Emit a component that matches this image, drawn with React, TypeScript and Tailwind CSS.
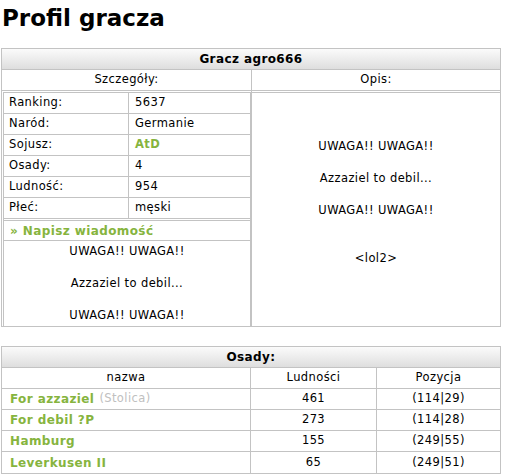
const details = [
  { label: "Ranking:", value: "5637" },
  { label: "Naród:", value: "Germanie" },
  { label: "Sojusz:", value: "AtD", link: true },
  { label: "Osady:", value: "4" },
  { label: "Ludność:", value: "954" },
  { label: "Płeć:", value: "męski" },
];

const villages = [
  { name: "For azzaziel", capital: true, pop: "461", pos: "(114|29)" },
  { name: "For debil ?P", capital: false, pop: "273", pos: "(114|28)" },
  { name: "Hamburg", capital: false, pop: "155", pos: "(249|55)" },
  { name: "Leverkusen II", capital: false, pop: "65", pos: "(249|51)" },
];

function Message() {
  return (
    <>
      UWAGA!! UWAGA!!
      <br />
      <br />
      Azzaziel to debil...
      <br />
      <br />
      UWAGA!! UWAGA!!
    </>
  );
}

export default function App() {
  return (
    <div className="w-[513px] h-[475px] bg-white text-black font-['DejaVu_Sans',sans-serif] text-[11.5px] tracking-[0.4px]">
      <h1 className="h-[48px] pl-[2px] pt-[4px] text-[23px] leading-[28px] font-bold tracking-normal">
        Profil gracza
      </h1>

      {/* player table */}
      <div className="ml-px w-[500px] border border-[#c3c3c3]">
        <div className="h-[21px] flex items-center justify-center border-b border-[#c3c3c3] bg-gradient-to-b from-[#fbfbfb] to-[#dedede] font-bold text-[12px]">
          Gracz agro666
        </div>
        <div className="flex h-[21px] border-b border-[#c3c3c3]">
          <div className="w-[250px] flex items-center justify-center border-r border-[#c3c3c3]">
            Szczegóły:
          </div>
          <div className="flex-1 flex items-center justify-center">Opis:</div>
        </div>

        <div className="flex">
          <div className="w-[250px] pl-px pt-px border-r border-[#c3c3c3]">
            <div className="border-x border-t border-[#c3c3c3]">
              {details.map((d) => (
                <div key={d.label} className="flex h-[21px] border-b border-[#c3c3c3]">
                  <div className="w-[125px] flex items-center pl-[5px] border-r border-[#c3c3c3]">
                    {d.label}
                  </div>
                  <div
                    className={`flex-1 flex items-center pl-[6px] ${
                      d.link ? "font-bold text-[#86b43e]" : ""
                    }`}
                  >
                    {d.value}
                  </div>
                </div>
              ))}
              <div className="h-px" />
              <div className="h-[21px] flex items-center pl-[6px] border-y border-[#c3c3c3] font-bold text-[12px] text-[#86b43e]">
                » Napisz wiadomość
              </div>
              <div className="h-[85px] pt-[2px] text-center leading-[16px]">
                <Message />
              </div>
            </div>
          </div>

          <div className="flex-1 mt-px border-t border-[#c3c3c3] pt-[45px] text-center leading-[16px]">
            <Message />
            <br />
            <br />
            <br />
            &lt;lol2&gt;
          </div>
        </div>
      </div>

      {/* villages table */}
      <div className="mt-[19px] ml-px w-[500px] border border-[#c3c3c3]">
        <div className="h-[21px] flex items-center justify-center border-b border-[#c3c3c3] bg-gradient-to-b from-[#fbfbfb] to-[#dedede] font-bold text-[12px]">
          Osady:
        </div>
        <div className="grid grid-cols-[249px_126px_1fr]">
          <div className="h-[21px] flex items-center justify-center border-r border-b border-[#c3c3c3]">
            nazwa
          </div>
          <div className="h-[21px] flex items-center justify-center border-r border-b border-[#c3c3c3]">
            Ludności
          </div>
          <div className="h-[21px] flex items-center justify-center border-b border-[#c3c3c3]">
            Pozycja
          </div>
          {villages.map((v, i) => {
            const last = i === villages.length - 1;
            return (
              <div key={v.name} className="contents">
                <div
                  className={`h-[21px] flex items-center pl-[8px] border-r border-[#c3c3c3] ${
                    last ? "h-[20px]" : "border-b"
                  }`}
                >
                  <span className="font-bold text-[12px] text-[#86b43e]">{v.name}</span>
                  {v.capital && <span className="ml-[5px] text-[#c0c0c0]">(Stolica)</span>}
                </div>
                <div
                  className={`h-[21px] flex items-center justify-center border-r border-[#c3c3c3] ${
                    last ? "h-[20px]" : "border-b"
                  }`}
                >
                  {v.pop}
                </div>
                <div
                  className={`h-[21px] flex items-center justify-center border-[#c3c3c3] ${
                    last ? "h-[20px]" : "border-b"
                  }`}
                >
                  {v.pos}
                </div>
              </div>
            );
          })}
        </div>
      </div>
    </div>
  );
}
